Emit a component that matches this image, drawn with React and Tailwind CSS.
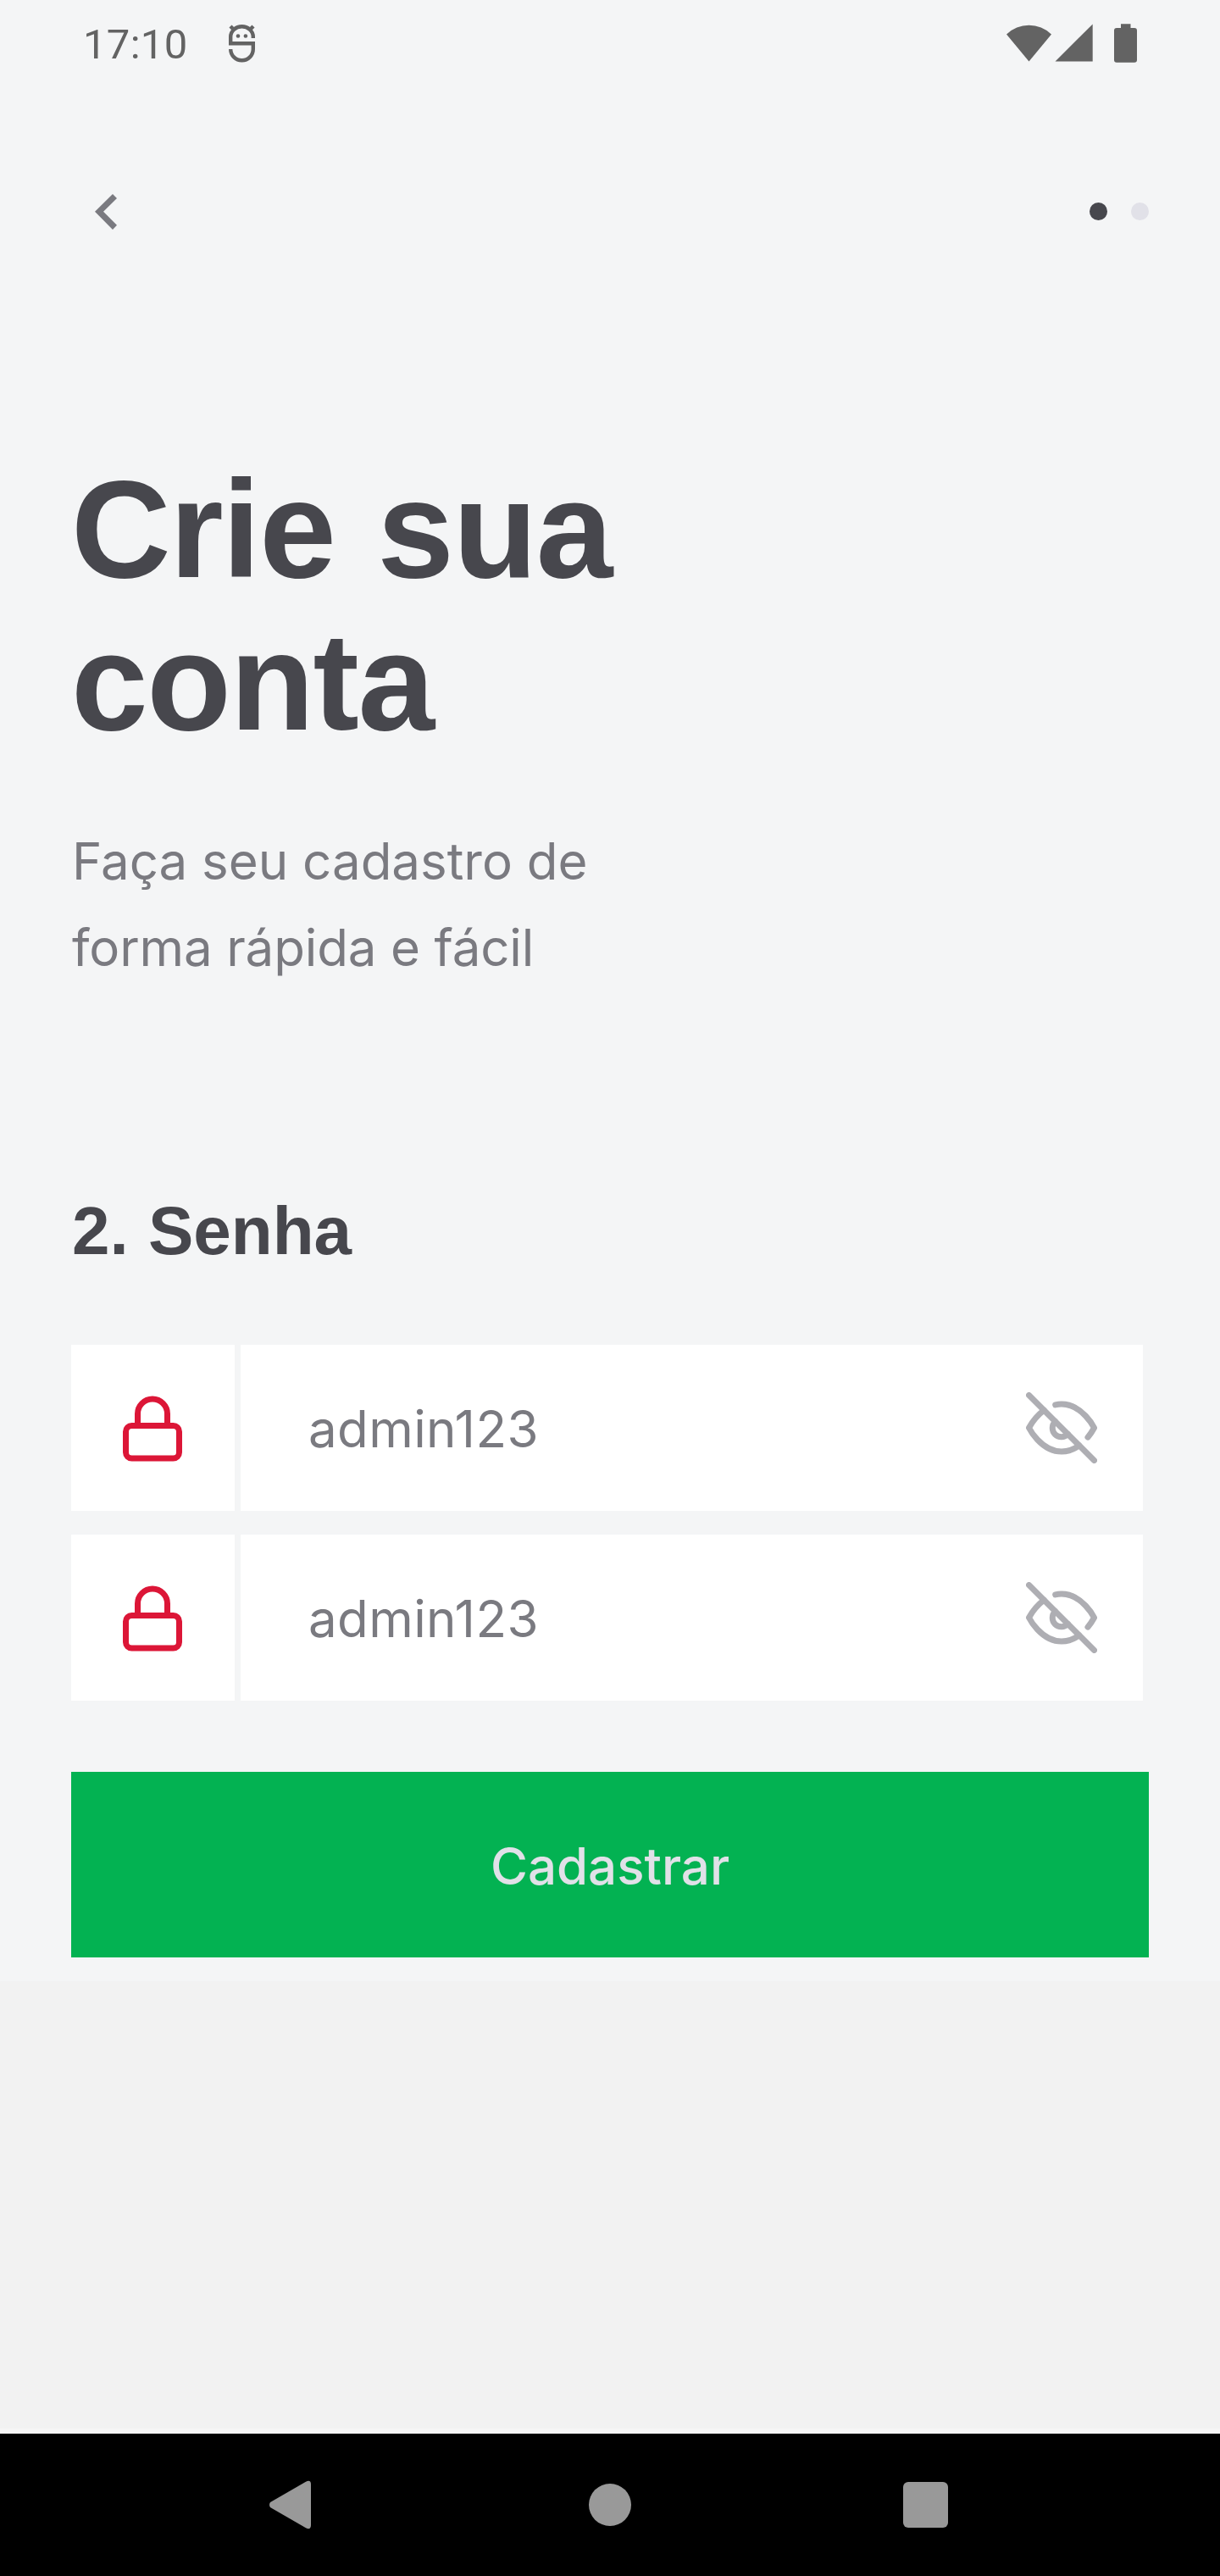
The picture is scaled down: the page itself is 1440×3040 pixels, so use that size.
const LockIcon = () => (
  <svg className="size-[84px]" viewBox="0 0 24 24" fill="none" stroke="#dc1637" strokeWidth="2" strokeLinecap="round" strokeLinejoin="round">
    <rect x="3" y="11" width="18" height="11" rx="2" />
    <path d="M7 11V7a5 5 0 0 1 10 0v4" />
  </svg>
);

const EyeOffIcon = () => (
  <svg className="size-[84px]" viewBox="0 0 24 24" fill="none" stroke="#aeaeb3" strokeWidth="2" strokeLinecap="round" strokeLinejoin="round">
    <path d="M17.94 17.94A10.07 10.07 0 0 1 12 20c-7 0-11-8-11-8a18.45 18.45 0 0 1 5.06-5.94M9.9 4.24A9.12 9.12 0 0 1 12 4c7 0 11 8 11 8a18.5 18.5 0 0 1-2.16 3.19m-6.72-1.07a3 3 0 1 1-4.24-4.24" />
    <path d="M1 1l22 22" />
  </svg>
);

const DebugIcon = () => (
  <svg className="ml-[47px] mt-7 h-[46px] w-[34px]" viewBox="0 0 34 46" fill="none" stroke="#636363" strokeWidth="4.4">
    <path d="M30.800 17V15.500A13.300 12.300 0 0 0 4.200 15.500V23.300H30.800V30A13.300 13.300 0 0 1 4.200 30" />
    <path d="M4 3l5 5M31 3l-5 5" />
    <circle cx="13" cy="14.500" r="2.300" fill="#636363" stroke="none" />
    <circle cx="21.900" cy="14.500" r="2.300" fill="#636363" stroke="none" />
  </svg>
);

function StatusBar() {
  return (
    <div className="flex h-[84px] items-start pl-[98px] pr-[96px]">
      <span className="mt-[24px] w-[123px] font-['Roboto',sans-serif] text-[49px] leading-[57px] tracking-[0.3px] text-[#636363]">17:10</span>
      <DebugIcon />
      <svg className="ml-auto mt-7 h-[47px] w-[156px]" viewBox="0 0 156 47" fill="#636363">
        <path d="M0 12.500A38 38 0 0 1 53 12.500L26.500 44.500Z" />
        <path d="M57.500 44.500L101.700 .5V44.500Z" />
        <path d="M135 .3h11.500V5h4.500a3 3 0 0 1 3 3v34.700a3 3 0 0 1-3 3h-21a3 3 0 0 1-3-3V8a3 3 0 0 1 3-3h5Z" />
      </svg>
    </div>
  );
}

function PasswordField() {
  return (
    <div className="flex h-[196px] gap-[7px]">
      <div className="flex w-[193px] items-center justify-center bg-white pr-px pt-px">
        <LockIcon />
      </div>
      <div className="flex w-[1065px] items-center justify-between bg-white pl-20 pr-[54px]">
        <span className="pt-0.5 text-[60px] leading-[72px] tracking-[0.4px] text-[#7a7a80]">admin123</span>
        <EyeOffIcon />
      </div>
    </div>
  );
}

export default function App() {
  return (
    <div className="flex h-[3040px] w-[1440px] flex-col overflow-hidden bg-[#f2f2f2] font-['Inter',sans-serif]">
      <main className="flex h-[2338px] flex-col bg-[#f4f5f6]">
        <StatusBar />
        <div className="mt-[144px] flex h-[43px] items-center justify-between pl-[112px] pr-[84px]">
          <svg className="h-[43px] w-[27px]" viewBox="0 0 27 43" fill="#7a7a80">
            <path d="M21 1l5 5L10 21.700l16 16L21 43L0 21.700Z" />
          </svg>
          <div className="flex gap-7">
            <span className="size-[21px] rounded-full bg-[#47474d]" />
            <span className="size-[21px] rounded-full bg-[#e1e1e8]" />
          </div>
        </div>
        <div className="px-[84px] pt-[264px]">
          <h1 className="h-[360px] font-['Liberation_Sans',Arial,sans-serif] text-[163px] font-bold leading-[180px] tracking-[-1.4px] text-[#47474d] [word-spacing:6px]">
            Crie sua<br />conta
          </h1>
          <p className="mt-[70px] pl-px text-[60px] leading-[102px] text-[#7a7a80]">
            Faça seu cadastro de<br />
            <span className="tracking-[-0.15px]">forma rápida e fácil</span>
          </p>
          <h2 className="mt-[239px] h-[90px] pl-px font-['Liberation_Sans',Arial,sans-serif] text-[80px] font-bold leading-[90px] text-[#47474d] [word-spacing:1px]">2. Senha</h2>
          <div className="mt-[89px] flex flex-col gap-7">
            <PasswordField />
            <PasswordField />
          </div>
          <button className="mt-[84px] flex h-[219px] w-full items-center justify-center bg-[#03b252] pt-0.5 text-[60px] font-medium text-[#e1e1e8]">Cadastrar</button>
        </div>
      </main>
      <nav className="mt-auto flex h-[174px] items-center justify-between border-t-[6px] border-[#f6f6f6] bg-black pl-[318px] pr-[321px]">
        <svg className="h-[58px] w-[50px]" viewBox="0 0 50 58" fill="#999">
          <path d="M1 26L43 1.700Q49 -1 49 5V53Q49 59 43 56.300L1 32Q-1 29 1 26Z" />
        </svg>
        <span className="ml-1.5 size-[50px] rounded-full bg-[#999]" />
        <span className="h-[54px] w-[53px] rounded-[6px] bg-[#999]" />
      </nav>
    </div>
  );
}
